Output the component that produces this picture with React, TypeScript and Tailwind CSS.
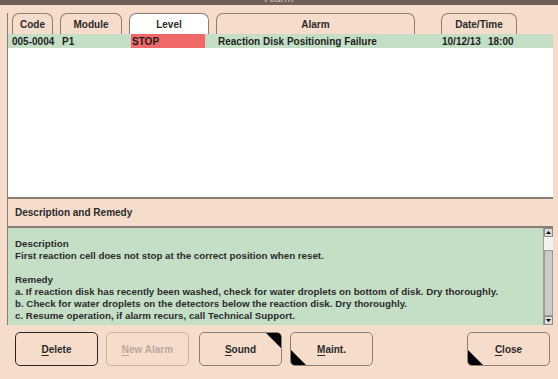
import type { ReactNode } from 'react';

const FONT = { fontFamily: '"Liberation Sans", Arial, sans-serif' };

function Tab({ label, w, active, ml }: { label: string; w: string; active?: boolean; ml: string }) {
  return (
    <div
      className={`${w} ${ml} flex h-[21px] items-center justify-center rounded-t-[7px] border border-b-0 border-[#8c7d76] text-[10px] font-bold text-[#2a2a2a] ${
        active ? 'bg-white' : 'bg-[#f6dccb]'
      }`}
    >
      {label}
    </div>
  );
}

function Btn({
  children,
  x,
  corner,
  disabled,
  focused,
}: {
  children: ReactNode;
  x: string;
  corner?: 'tr' | 'bl';
  disabled?: boolean;
  focused?: boolean;
}) {
  return (
    <div
      className={`${x} relative flex h-[34px] w-[83px] items-center justify-center overflow-hidden rounded-[5px] border-[1.5px] bg-[#f6dccb] text-[10px] font-bold ${
        disabled
          ? 'border-[#cdb3a6] text-[#b9a79e]'
          : focused
            ? 'border-[#2e2622] text-[#2a2a2a]'
            : 'border-[#8c7d76] text-[#2a2a2a]'
      }`}
    >
      {children}
      {corner === 'tr' && (
        <svg className="absolute right-0 top-0" width="15" height="15" viewBox="0 0 15 15">
          <polygon points="0,0 15,0 15,15" fill="#000" />
        </svg>
      )}
      {corner === 'bl' && (
        <svg className="absolute bottom-0 left-0" width="15" height="15" viewBox="0 0 15 15">
          <polygon points="0,0 15,15 0,15" fill="#000" />
        </svg>
      )}
    </div>
  );
}

function U({ c, rest }: { c: string; rest: string }) {
  return (
    <span>
      <span className="underline underline-offset-2">{c}</span>
      {rest}
    </span>
  );
}

export default function App() {
  return (
    <div className="flex h-[379px] w-[558px] flex-col overflow-hidden bg-[#f6dccb]" style={FONT}>
      {/* title bar */}
      <div className="flex h-[5px] justify-center overflow-hidden bg-[#6e5f59]">
        <span className="-mt-[8px] text-[11px] leading-[13px] text-[#cfc2bc]">Alarm</span>
      </div>
      <div className="h-[8px]" />

      <div className="ml-[7px] flex w-[546px] flex-col border-l border-[#8c7d76]">
        {/* tabs */}
        <div className="flex h-[21px] items-end pl-[4px]">
          <Tab label="Code" w="w-[41px]" ml="ml-0" />
          <Tab label="Module" w="w-[62px]" ml="ml-[7px]" />
          <Tab label="Level" w="w-[80px]" ml="ml-[7px]" active />
          <Tab label="Alarm" w="w-[199px]" ml="ml-[7px]" />
          <Tab label="Date/Time" w="w-[76px]" ml="ml-[26px]" />
        </div>

        {/* alarm row */}
        <div className="flex h-[14px] items-center bg-[#c5dfc6] text-[10px] font-bold text-[#1e1e1e]">
          <span className="ml-[4px] w-[50px]">005-0004</span>
          <span className="w-[69px]">P1</span>
          <span className="flex h-[14px] w-[74px] items-center bg-[#f06969] pl-[1px]">STOP</span>
          <span className="ml-[13px] w-[224px]">Reaction Disk Positioning Failure</span>
          <span className="w-[46px]">10/12/13</span>
          <span>18:00</span>
        </div>

        <div className="h-[149px] bg-white" />

        <div className="h-[2px] bg-[#8c7d76]" />

        {/* description header */}
        <div className="flex h-[27px] items-center pl-[7px] text-[10px] font-bold text-[#2a2a2a]">
          Description and Remedy
        </div>
        <div className="h-[2px] bg-[#8c7d76]" />

        {/* description body */}
        <div className="flex h-[97px] bg-[#c5dfc6]">
          <div className="flex-1 pl-[7px] pt-[10px] text-[9.75px] font-bold leading-[12px] text-[#2b2b2b]">
            <div>Description</div>
            <div>First reaction cell does not stop at the correct position when reset.</div>
            <div className="h-[12px]" />
            <div>Remedy</div>
            <div>a. If reaction disk has recently been washed, check for water droplets on bottom of disk. Dry thoroughly.</div>
            <div>b. Check for water droplets on the detectors below the reaction disk. Dry thoroughly.</div>
            <div>c. Resume operation, if alarm recurs, call Technical Support.</div>
          </div>
          {/* scrollbar */}
          <div className="flex w-[10px] flex-col border-l border-[#9a9a9a] bg-[#e4e4e4]">
            <div className="flex h-[9px] items-center justify-center border border-[#8a8a8a] bg-[#dcdcdc]">
              <svg width="5" height="3" viewBox="0 0 5 3">
                <polygon points="2.5,0 5,3 0,3" fill="#000" />
              </svg>
            </div>
            <div className="h-[13px] bg-[#f2f2f2]" />
            <div className="flex-1 border border-[#9a9a9a] bg-[#cbcbcb]" />
            <div className="flex h-[9px] items-center justify-center border border-[#8a8a8a] bg-[#dcdcdc]">
              <svg width="5" height="3" viewBox="0 0 5 3">
                <polygon points="0,0 5,0 2.5,3" fill="#000" />
              </svg>
            </div>
          </div>
        </div>
      </div>

      {/* buttons */}
      <div className="mt-[7px] flex">
        <Btn x="ml-[15px]" focused>
          <U c="D" rest="elete" />
        </Btn>
        <Btn x="ml-[8px]" disabled>
          <U c="N" rest="ew Alarm" />
        </Btn>
        <Btn x="ml-[10px]" corner="tr">
          <U c="S" rest="ound" />
        </Btn>
        <Btn x="ml-[8px]" corner="bl">
          <U c="M" rest="aint." />
        </Btn>
        <Btn x="ml-[94px]" corner="bl">
          <U c="C" rest="lose" />
        </Btn>
      </div>
    </div>
  );
}
